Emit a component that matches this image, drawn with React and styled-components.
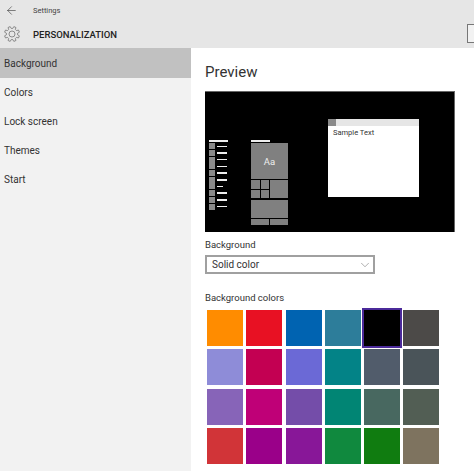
import React from 'react';
import styled, { createGlobalStyle } from 'styled-components';
import { ArrowLeft, ChevronDown } from 'lucide-react';

const GlobalStyle = createGlobalStyle`
html, body {
    margin: 0;
    padding: 0;
    background: #fff;
}
body {
    width: 474px;
    height: 471px;
    overflow: hidden;
    font-family: Roboto, "Open Sans", "Liberation Sans", sans-serif;
    color: #333;
}
`;

const menuItems = ['Background', 'Colors', 'Lock screen', 'Themes', 'Start'];

const swatches = [
    '#ff8c00', '#e81123', '#0063b1', '#2d7d9a', '#000000', '#4c4a48',
    '#8e8cd8', '#c30052', '#6b69d6', '#038387', '#515c6b', '#4a5459',
    '#8764b8', '#bf0077', '#744da9', '#018574', '#486860', '#525e54',
    '#d13438', '#9a0089', '#881798', '#10893e', '#107c10', '#7e735f',
];

const listLines = [1, 1, 1, 1, 1, 1, 0, 1, 1, 1];

// eight teeth, each one four points around the centre of a 18x18 box
const gearPath = () => {
    const points = [];
    for (let t = 0; t < 8; t++) {
        const a = (t * Math.PI) / 4 + Math.PI / 8;
        [[-0.26, 5.6], [-0.15, 7.6], [0.15, 7.6], [0.26, 5.6]].forEach(([off, r]) => {
            points.push(`${(9 + Math.cos(a + off) * r).toFixed(2)} ${(9 + Math.sin(a + off) * r).toFixed(2)}`);
        });
    }
    return `M${points.join('L')}Z`;
};

const GearIcon = () => (
    <GearSvg viewBox="0 0 18 18">
        <path d={gearPath()} />
        <circle cx="9" cy="9" r="3" />
    </GearSvg>
);

const App = () => {
    return (
        <Page>
            <GlobalStyle />
            <Header>
                <TopRow>
                    <ArrowLeft size={13} strokeWidth={1} color="#222" />
                    <AppName>Settings</AppName>
                </TopRow>
                <TitleRow>
                    <GearIcon />
                    <PageName>PERSONALIZATION</PageName>
                    <SearchEdge />
                </TitleRow>
            </Header>
            <Body>
                <Sidebar>
                    {menuItems.map((item, i) => (
                        <MenuItem key={item} $active={i === 0}>{item}</MenuItem>
                    ))}
                </Sidebar>
                <Content>
                    <Heading>Preview</Heading>
                    <Preview>
                        <StartMenu>
                            <AppList>
                                <WideLine />
                                {listLines.map((full, i) => (
                                    <AppRow key={i}>
                                        <AppIcon />
                                        <AppLine $short={!full} />
                                    </AppRow>
                                ))}
                            </AppList>
                            <TileColumn>
                                <WideLine />
                                <Tiles>
                                    <BigTile>Aa</BigTile>
                                    <TileRow>
                                        <SmallTiles>
                                            <Tile />
                                            <Tile />
                                            <Tile />
                                            <Tile />
                                        </SmallTiles>
                                        <MediumTile />
                                    </TileRow>
                                    <WideTile />
                                    <BottomTiles>
                                        <Tile />
                                        <Tile />
                                    </BottomTiles>
                                </Tiles>
                            </TileColumn>
                        </StartMenu>
                        <SampleWindow>
                            <WindowBar>
                                <WindowIcon />
                            </WindowBar>
                            <WindowText>Sample Text</WindowText>
                        </SampleWindow>
                    </Preview>
                    <FieldLabel>Background</FieldLabel>
                    <Select>
                        <span>Solid color</span>
                        <ChevronDown size={14} strokeWidth={0.9} color="#666" />
                    </Select>
                    <ColorsLabel>Background colors</ColorsLabel>
                    <Swatches>
                        {swatches.map((color, i) => (
                            <Swatch key={i} $color={color} $selected={i === 4} />
                        ))}
                    </Swatches>
                </Content>
            </Body>
        </Page>
    );
}

const Page = styled.div`
width: 474px;
height: 471px;
display: flex;
flex-direction: column;
overflow: hidden;
`;

const Header = styled.div`
height: 48px;
background: #e6e6e6;
display: flex;
flex-direction: column;
flex-shrink: 0;
`;

const TopRow = styled.div`
height: 20px;
display: flex;
align-items: center;
padding-left: 5px;
`;

const AppName = styled.span`
font-size: 7.5px;
margin-left: 15px;
color: #444;
`;

const TitleRow = styled.div`
position: relative;
height: 28px;
display: flex;
align-items: center;
padding-left: 3px;
box-sizing: border-box;
`;

const GearSvg = styled.svg`
width: 18px;
height: 18px;
flex-shrink: 0;
fill: none;
stroke: #666;
stroke-width: 0.7;
stroke-linejoin: round;
`;

const PageName = styled.span`
font-size: 9.5px;
font-weight: 500;
margin-left: 12px;
color: #222;
`;

const SearchEdge = styled.div`
position: absolute;
left: 467px;
top: 4px;
width: 10px;
height: 19px;
border: 1px solid #777;
background: #f2f2f2;
box-sizing: border-box;
`;

const Body = styled.div`
flex: 1;
display: flex;
min-height: 0;
`;

const Sidebar = styled.div`
width: 191px;
background: #f2f2f2;
flex-shrink: 0;
`;

const MenuItem = styled.div`
height: 29px;
padding: 0 4px;
display: flex;
align-items: center;
font-size: 10px;
color: #333;
background: ${props => props.$active ? '#c1c1c1' : 'transparent'};
&:first-child {
    height: 30px;
}
`;

const Content = styled.div`
flex: 1;
padding: 15px 0 0 14px;
min-width: 0;
`;

const Heading = styled.h2`
margin: 0;
height: 28px;
font-size: 15px;
font-weight: 400;
line-height: 19px;
color: #333;
`;

const Preview = styled.div`
width: 250px;
height: 141px;
box-sizing: border-box;
background: #000;
border-top: 1px solid #666;
border-right: 1px solid #666;
display: flex;
align-items: flex-start;
padding-left: 4px;
`;

const StartMenu = styled.div`
display: flex;
margin-top: 48px;
`;

const WideLine = styled.div`
width: 19px;
height: 2px;
background: #eee;
margin-bottom: 1px;
`;

const AppList = styled.div`
width: 42px;
`;

const AppRow = styled.div`
display: flex;
align-items: center;
height: 6.7px;
`;

const AppIcon = styled.div`
width: 6px;
height: 6px;
background: #8a8a8a;
`;

const AppLine = styled.div`
width: ${props => props.$short ? '6px' : '10px'};
height: 1.5px;
margin-left: 2px;
background: #eee;
`;

const TileColumn = styled.div`
width: 37px;
`;

const Tiles = styled.div`
display: flex;
flex-direction: column;
gap: 1px;
`;

const BigTile = styled.div`
height: 36px;
background: #808080;
color: #eee;
font-size: 9.5px;
display: flex;
align-items: center;
justify-content: center;
`;

const TileRow = styled.div`
display: flex;
gap: 1px;
height: 18px;
`;

const SmallTiles = styled.div`
width: 18px;
display: grid;
grid-template-columns: 1fr 1fr;
grid-template-rows: 1fr 1fr;
gap: 1px;
`;

const Tile = styled.div`
background: #808080;
`;

const MediumTile = styled.div`
flex: 1;
background: #808080;
`;

const WideTile = styled.div`
height: 18px;
background: #808080;
margin-top: 1px;
`;

const BottomTiles = styled.div`
display: grid;
grid-template-columns: 1fr 1fr;
gap: 1px;
height: 6px;
`;

const SampleWindow = styled.div`
width: 91px;
height: 78px;
margin: 27px 0 0 40px;
background: #fff;
`;

const WindowBar = styled.div`
height: 7px;
background: #e6e6e6;
`;

const WindowIcon = styled.div`
width: 8px;
height: 7px;
background: #8a8a8a;
`;

const WindowText = styled.div`
font-size: 7.5px;
padding: 2px 0 0 5px;
color: #333;
`;

const FieldLabel = styled.div`
font-size: 9.5px;
line-height: 12px;
margin-top: 7px;
color: #333;
`;

const Select = styled.div`
width: 170px;
height: 19px;
margin-top: 4px;
box-sizing: border-box;
border: 2px solid #a0a0a0;
background: #fff;
display: flex;
align-items: center;
justify-content: space-between;
padding: 0 1px 0 5px;
font-size: 10px;
color: #333;
`;

const ColorsLabel = styled(FieldLabel)`
margin-top: 18px;
`;

const Swatches = styled.div`
display: grid;
grid-template-columns: repeat(6, 36px);
grid-auto-rows: 36px;
gap: 3.3px;
margin: 6px 0 0 2px;
`;

const Swatch = styled.div`
background: ${props => props.$color};
box-sizing: border-box;
${props => props.$selected && `
    outline: 2px solid #4b2a9a;
    outline-offset: 0;
`}
`;

export default App;
